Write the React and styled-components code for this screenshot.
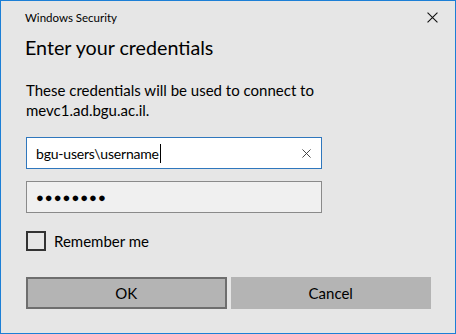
import React from "react";
import styled, { createGlobalStyle } from "styled-components";

const GlobalStyle = createGlobalStyle`
  html, body {
    margin: 0;
    padding: 0;
    background: #e6e6e6;
  }
  * {
    box-sizing: border-box;
  }
`;

const StyledWindow = styled.div`
  width: 456px;
  height: 334px;
  border: 1px solid #1c7fd6;
  background: #e6e6e6;
  font-family: Lato, "Noto Sans", sans-serif;
  color: #000;
  display: flex;
  flex-direction: column;
  padding: 0 24px;
`;

const TitleBar = styled.div`
  display: flex;
  align-items: center;
  justify-content: space-between;
  height: 33px;
  font-size: 11.5px;
  color: #000;
`;

const CloseButton = styled.button`
  display: flex;
  align-items: center;
  justify-content: center;
  width: 20px;
  height: 20px;
  margin-right: -11px;
  padding: 0;
  border: 0;
  background: transparent;
  color: #000;
`;

const Heading = styled.h1`
  margin: 0;
  font-size: 19.7px;
  font-weight: 400;
  line-height: 28px;
`;

const Description = styled.p`
  margin: 18px 0 0 1px;
  font-size: 15px;
  line-height: 20px;
`;

const Form = styled.div`
  display: flex;
  flex-direction: column;
  gap: 12px;
  margin-top: 17px;
  margin-left: 1px;
`;

const Field = styled.div`
  display: flex;
  align-items: center;
  width: 296px;
  height: 32px;
  padding: 0 10px 0 9px;
  border: 1px solid ${({ focused }) => (focused ? "#2f77bd" : "#8a8a8a")};
  background: ${({ focused }) => (focused ? "#ffffff" : "#f0f0f0")};
  font-size: 14px;
  letter-spacing: -0.2px;
`;

const FieldText = styled.span`
  flex: 1;
  white-space: nowrap;
`;

const Caret = styled.span`
  display: inline-block;
  width: 1px;
  height: 19px;
  margin-left: 1px;
  vertical-align: -4px;
  background: #000;
`;

const Dots = styled.span`
  flex: 1;
  font-family: "Noto Sans", sans-serif;
  font-size: 13px;
  letter-spacing: 1px;
`;

const ClearIcon = styled.svg`
  width: 10px;
  height: 10px;
`;

const CheckRow = styled.label`
  display: flex;
  align-items: center;
  gap: 8px;
  margin-top: 18px;
  margin-left: 1px;
  font-size: 15px;
`;

const Checkbox = styled.span`
  width: 20px;
  height: 20px;
  border: 2px solid #333333;
`;

const Buttons = styled.div`
  display: grid;
  grid-template-columns: 1fr 1fr;
  gap: 4px;
  margin-top: 26px;
  margin-left: 1px;
`;

const Button = styled.button`
  height: 32px;
  border: 2px solid ${({ primary }) => (primary ? "#6e6e6e" : "#b4b4b4")};
  background: #b4b4b4;
  font-family: inherit;
  font-size: 15px;
  color: #000;
  padding: 0;
`;

const Cross = ({ size = 10, stroke = "#000", width = 1 }) => (
  <ClearIcon viewBox="0 0 10 10" style={{ width: size, height: size }}>
    <path d="M0.5 0.5 L9.5 9.5 M9.5 0.5 L0.5 9.5" stroke={stroke} strokeWidth={width} />
  </ClearIcon>
);

const App = () => {
  return (
    <>
      <GlobalStyle />
      <StyledWindow>
        <TitleBar>
          <span>Windows Security</span>
          <CloseButton aria-label="Close">
            <Cross size={11} stroke="#111" />
          </CloseButton>
        </TitleBar>
        <Heading>Enter your credentials</Heading>
        <Description>
          These credentials will be used to connect to
          <br />
          mevc1.ad.bgu.ac.il.
        </Description>
        <Form>
          <Field focused>
            <FieldText>
              bgu-users\username
              <Caret />
            </FieldText>
            <Cross size={9} stroke="#333" />
          </Field>
          <Field>
            <Dots>●●●●●●●●</Dots>
          </Field>
        </Form>
        <CheckRow>
          <Checkbox />
          Remember me
        </CheckRow>
        <Buttons>
          <Button primary>OK</Button>
          <Button>Cancel</Button>
        </Buttons>
      </StyledWindow>
    </>
  );
};

export default App;
